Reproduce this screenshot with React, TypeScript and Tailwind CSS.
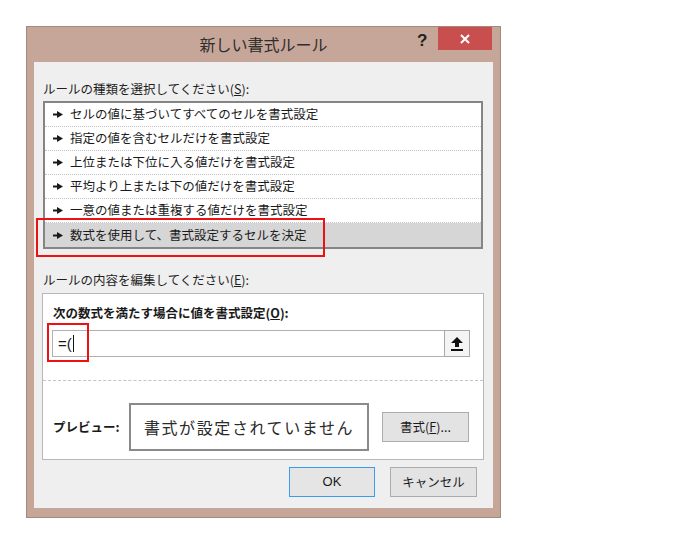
import React from "react";

const font = { fontFamily: '"Noto Sans CJK JP", "Noto Sans", sans-serif' };

function Arrow() {
  return (
    <svg width="10" height="7" viewBox="0 0 10 7" className="shrink-0">
      <rect x="0" y="2.5" width="5" height="2" fill="#1a1a1a" />
      <polygon points="4,0 10,3.5 4,7" fill="#1a1a1a" />
    </svg>
  );
}

function UpIcon() {
  return (
    <svg width="12" height="14" viewBox="0 0 12 14">
      <polygon points="6,0 12,6 8,6 8,10 4,10 4,6 0,6" fill="#111" />
      <rect x="0" y="12" width="12" height="2" fill="#111" />
    </svg>
  );
}

const items = [
  "セルの値に基づいてすべてのセルを書式設定",
  "指定の値を含むセルだけを書式設定",
  "上位または下位に入る値だけを書式設定",
  "平均より上または下の値だけを書式設定",
  "一意の値または重複する値だけを書式設定",
  "数式を使用して、書式設定するセルを決定",
];

export default function App() {
  return (
    <div className="w-[698px] h-[545px] bg-white" style={font}>
      <div className="ml-[26px] pt-[26px]">
        <div className="relative w-[475px] h-[492px] bg-[#c6a698] border border-[#a08a80] px-[7px] pb-[9px] flex flex-col">
          {/* title bar */}
          <div className="relative h-[35px] shrink-0 flex items-center justify-center">
            <span className="text-[16px] text-[#2e2e2e] leading-none mt-[-2px]">新しい書式ルール</span>
            <span className="absolute left-[383px] top-[5px] text-[17px] font-bold text-[#222] leading-none" style={{ fontFamily: '"Liberation Sans", sans-serif' }}>?</span>
            <div className="absolute left-[404px] top-0 w-[54px] h-[23px] bg-[#c94f4f] flex items-center justify-center">
              <svg width="10" height="10" viewBox="0 0 10 10">
                <path d="M1 1 L9 9 M9 1 L1 9" stroke="#fff" strokeWidth="2" />
              </svg>
            </div>
          </div>
          {/* body */}
          <div className="flex-1 bg-[#efefef] flex flex-col">
            <div className="mt-[19px] ml-[9px] h-[15px] leading-[15px] text-[12.5px] text-[#1e1e1e]">
              ルールの種類を選択してください(<span className="underline">S</span>):
            </div>
            <div className="relative mt-[5px] ml-[9px] w-[440px] h-[148px] border-2 border-[#858585] bg-white flex flex-col">
              {items.map((t, i) => (
                <div
                  key={i}
                  className={
                    "h-[24px] flex items-center gap-[7px] pl-[8px] text-[12.5px] text-[#1a1a1a] " +
                    (i < 5 ? "border-b border-dotted border-[#c4c4c4] " : "") +
                    (i === 5 ? "bg-[#d6d6d6]" : "")
                  }
                >
                  <Arrow />
                  <span className="leading-none">{t}</span>
                </div>
              ))}
              <div className="absolute left-[-9px] top-[115px] w-[289px] h-[39px] border-2 border-[#ee1111]" />
            </div>
            <div className="mt-[23px] ml-[9px] h-[15px] leading-[15px] text-[12.5px] text-[#1e1e1e]">
              ルールの内容を編集してください(<span className="underline">E</span>):
            </div>
            <div className="mt-[6px] ml-[8px] w-[442px] h-[167px] border border-[#b4b8bc] bg-white flex flex-col">
              <div className="mt-[11px] ml-[10px] h-[15px] leading-[15px] text-[12.5px] font-bold text-[#1a1a1a]">
                次の数式を満たす場合に値を書式設定(<span className="underline">O</span>):
              </div>
              <div className="relative mt-[10px] ml-[9px] w-[418px] h-[27px] border border-[#b0b0b0] bg-white flex items-center">
                <span className="ml-[5px] text-[15px] text-[#1a1a1a] leading-none" style={{ fontFamily: '"Liberation Sans", sans-serif' }}>=(</span>
                <span className="w-px h-[17px] bg-[#111] ml-[1px]" />
                <div className="ml-auto mr-[-1px] w-[26px] h-[27px] border border-[#a8a8a8] bg-[#f4f4f4] flex items-center justify-center">
                  <UpIcon />
                </div>
                <div className="absolute left-[-6px] top-[-8px] w-[42px] h-[39px] border-2 border-[#ee1111]" />
              </div>
              <div className="mt-[23px] border-t border-dashed border-[#c4c4c4]" />
              <div className="mt-[22px] ml-[10px] flex items-center">
                <span className="w-[76px] text-[12.5px] font-bold text-[#1a1a1a] leading-none">プレビュー:</span>
                <div className="w-[240px] h-[48px] border-2 border-[#8a8a8a] bg-white flex items-center justify-center">
                  <span className="text-[16px] tracking-[1.6px] text-[#2a2a2a] leading-none">書式が設定されていません</span>
                </div>
                <div className="ml-[13px] w-[87px] h-[30px] border border-[#acacac] bg-[#e3e3e3] flex items-center justify-center text-[12.5px] text-[#1a1a1a]">
                  書式(<span className="underline">F</span>)...
                </div>
              </div>
            </div>
            <div className="mt-[7px] flex justify-end gap-[15px] pr-[16px]">
              <div className="w-[86px] h-[30px] border border-[#3c9bea] bg-[#e5e5e5] flex items-center justify-center text-[13px] text-[#1a1a1a]" style={{ fontFamily: '"Liberation Sans", sans-serif' }}>
                OK
              </div>
              <div className="w-[87px] h-[30px] border border-[#acacac] bg-[#e3e3e3] flex items-center justify-center text-[12.5px] text-[#1a1a1a]">
                キャンセル
              </div>
            </div>
          </div>
        </div>
      </div>
    </div>
  );
}
